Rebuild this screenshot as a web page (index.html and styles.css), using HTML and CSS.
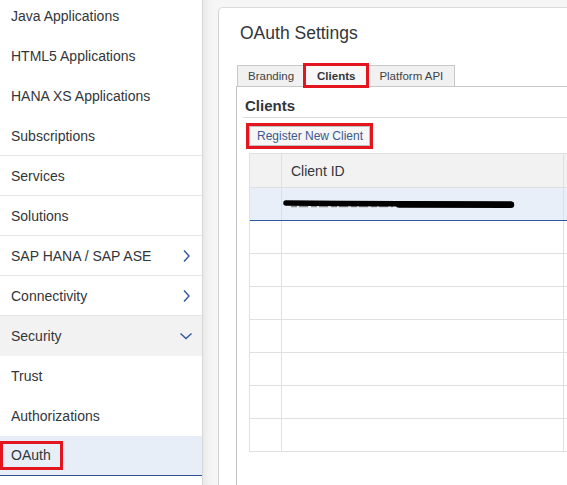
FILE: index.html
```html
<!DOCTYPE html>
<html lang="en">
<head>
<meta charset="utf-8">
<title>OAuth Settings</title>
<link rel="stylesheet" href="styles.css">
</head>
<body>
  <nav class="sidebar">
    <div class="nav-list">
      <div class="nav-item">Java Applications</div>
      <div class="nav-item">HTML5 Applications</div>
      <div class="nav-item">HANA XS Applications</div>
      <div class="nav-item sep">Subscriptions</div>
      <div class="nav-item sep">Services</div>
      <div class="nav-item sep">Solutions</div>
      <div class="nav-item sep">SAP HANA / SAP ASE
        <svg class="chev" width="12" height="12" viewBox="0 0 12 12"><path d="M4 0.5 L9 6 L4 11.5" fill="none" stroke="#2f56a0" stroke-width="1.4"/></svg>
      </div>
      <div class="nav-item sep">Connectivity
        <svg class="chev" width="12" height="12" viewBox="0 0 12 12"><path d="M4 0.5 L9 6 L4 11.5" fill="none" stroke="#2f56a0" stroke-width="1.4"/></svg>
      </div>
      <div class="nav-item group">Security
        <svg class="chev" width="12" height="12" viewBox="0 0 12 12"><path d="M0.5 3.5 L6 8.5 L11.5 3.5" fill="none" stroke="#2f56a0" stroke-width="1.4"/></svg>
      </div>
      <div class="nav-item">Trust</div>
      <div class="nav-item">Authorizations</div>
      <div class="nav-item active"><span class="mark">OAuth</span></div>
    </div>
  </nav>

  <main class="main">
    <section class="card">
      <h1 class="title">OAuth Settings</h1>
      <div class="tabs">
        <div class="tab">Branding</div>
        <div class="tab current">Clients</div>
        <div class="tab">Platform API</div>
      </div>
      <div class="panel">
        <h2 class="panel-head">Clients</h2>
        <button class="btn" type="button">Register New Client</button>
        <div class="grid">
          <div class="tr head">
            <div class="td"></div>
            <div class="td">Client ID</div>
            <div class="td"></div>
          </div>
          <div class="tr selected">
            <div class="td"></div>
            <div class="td scribble-cell">
              <svg width="232" height="12" viewBox="0 0 232 12">
                <path d="M8 8.5 L110 8.5" stroke="#8a8a8a" stroke-width="1.5" stroke-dasharray="6 2 9 3" fill="none"/>
                <path d="M3 5 L60 5.5 L116 5.8 L228 6.2" stroke="#000" stroke-width="5.5" stroke-linecap="round" fill="none"/>
                <path d="M116 6.5 L228 6.8" stroke="#000" stroke-width="6.5" stroke-linecap="round" fill="none"/>
              </svg>
            </div>
            <div class="td"></div>
          </div>
          <div class="tr"><div class="td"></div><div class="td"></div><div class="td"></div></div>
          <div class="tr"><div class="td"></div><div class="td"></div><div class="td"></div></div>
          <div class="tr"><div class="td"></div><div class="td"></div><div class="td"></div></div>
          <div class="tr"><div class="td"></div><div class="td"></div><div class="td"></div></div>
          <div class="tr"><div class="td"></div><div class="td"></div><div class="td"></div></div>
          <div class="tr"><div class="td"></div><div class="td"></div><div class="td"></div></div>
          <div class="tr"><div class="td"></div><div class="td"></div><div class="td"></div></div>
        </div>
      </div>
    </section>
  </main>
</body>
</html>
```

FILE: styles.css
```css
* { box-sizing: border-box; }

html, body {
  margin: 0;
  height: 485px;
  overflow: hidden;
}

body {
  display: flex;
  font-family: "Liberation Sans", Arial, sans-serif;
  color: #32363a;
  background: #f7f7f7;
}

.sidebar {
  width: 203px;
  flex-shrink: 0;
  background: #ffffff;
  border-right: 1px solid #d6d6d6;
  overflow: hidden;
}

.nav-list {
  margin-top: -4px;
}

.nav-item {
  height: 40px;
  display: flex;
  align-items: center;
  justify-content: space-between;
  padding: 0 10px 0 11px;
  font-size: 14px;
  color: #32363a;
}

.nav-item.sep {
  border-bottom: 1px solid #e5e5e5;
}

.nav-item.group {
  background: #f2f2f2;
}

.nav-item.active {
  background: #e8eef8;
  border-bottom: 1px solid #2b4f94;
}

.chev {
  display: block;
  flex-shrink: 0;
}

.mark {
  display: inline-block;
  margin-left: -11px;
  padding: 3px 9px 3px 8px;
  line-height: 17px;
  border: 3px solid #e3151e;
}

.main {
  flex: 1;
  min-width: 0;
  overflow: hidden;
  padding: 7px 0 0 15px;
  background: linear-gradient(to right, #e9e9e9, #f3f3f3 6px, #f6f6f6 15px);
}

.card {
  height: 100%;
  overflow: hidden;
  background: #ffffff;
  border-top: 1px solid #dcdcdc;
  border-left: 1px solid #d2d2d2;
  border-top-left-radius: 5px;
  padding: 13px 0 0 17px;
}

.title {
  margin: 0 0 20px 4px;
  font-size: 17.5px;
  font-weight: normal;
  line-height: 24px;
  color: #32363a;
}

.tabs {
  display: flex;
  padding-left: 1px;
}

.tab {
  height: 21px;
  line-height: 20px;
  padding: 0 10px;
  font-size: 11.5px;
  color: #3f4246;
  background: #f1f1f1;
  border: 1px solid #c8c8c8;
  border-bottom: none;
}

.tab.current {
  font-weight: bold;
  font-size: 11.5px;
  padding: 0 11px;
  color: #32363a;
  background: #f8f8f8;
  outline: 3px solid #e3151e;
  outline-offset: -1px;
  position: relative;
}

.tab:last-child {
  padding: 0 11px;
}

.panel {
  height: 400px;
  border-top: 1px solid #c8c8c8;
  border-left: 1px solid #c4c4c4;
}

.panel-head {
  margin: 0 0 8px 6px;
  padding: 9px 0 1px 2px;
  font-size: 15px;
  font-weight: bold;
  line-height: 20px;
  color: #32363a;
  border-bottom: 1px solid #dcdcdc;
}

.btn {
  display: block;
  margin: 0 0 7px 12px;
  height: 20px;
  padding: 0 6px 0 7px;
  font-family: "Liberation Sans", Arial, sans-serif;
  font-size: 12px;
  line-height: 18px;
  color: #3b5a8e;
  background: #f6f6f6;
  border: 1px solid #bfbfbf;
  border-radius: 0;
  outline: 3px solid #e3151e;
  outline-offset: 0;
}

.grid {
  margin-left: 12px;
  width: 318px;
  border-top: 1px solid #e0e0e0;
  border-left: 1px solid #e0e0e0;
}

.tr {
  display: grid;
  grid-template-columns: 32px 282px 1fr;
  height: 33px;
  border-bottom: 1px solid #e0e0e0;
}

.tr.head {
  height: 34px;
  background: #f2f2f2;
}

.tr.selected {
  background: #e8eff9;
  border-bottom-color: #2b5aa3;
}

.td {
  border-right: 1px solid #e0e0e0;
  display: flex;
  align-items: center;
  padding-left: 9px;
  font-size: 14px;
  color: #32363a;
}

.td:first-child {
  padding-left: 0;
}

.td:last-child {
  border-right: none;
}

.scribble-cell {
  padding-left: 1px;
}

.scribble-cell svg {
  display: block;
}
```
